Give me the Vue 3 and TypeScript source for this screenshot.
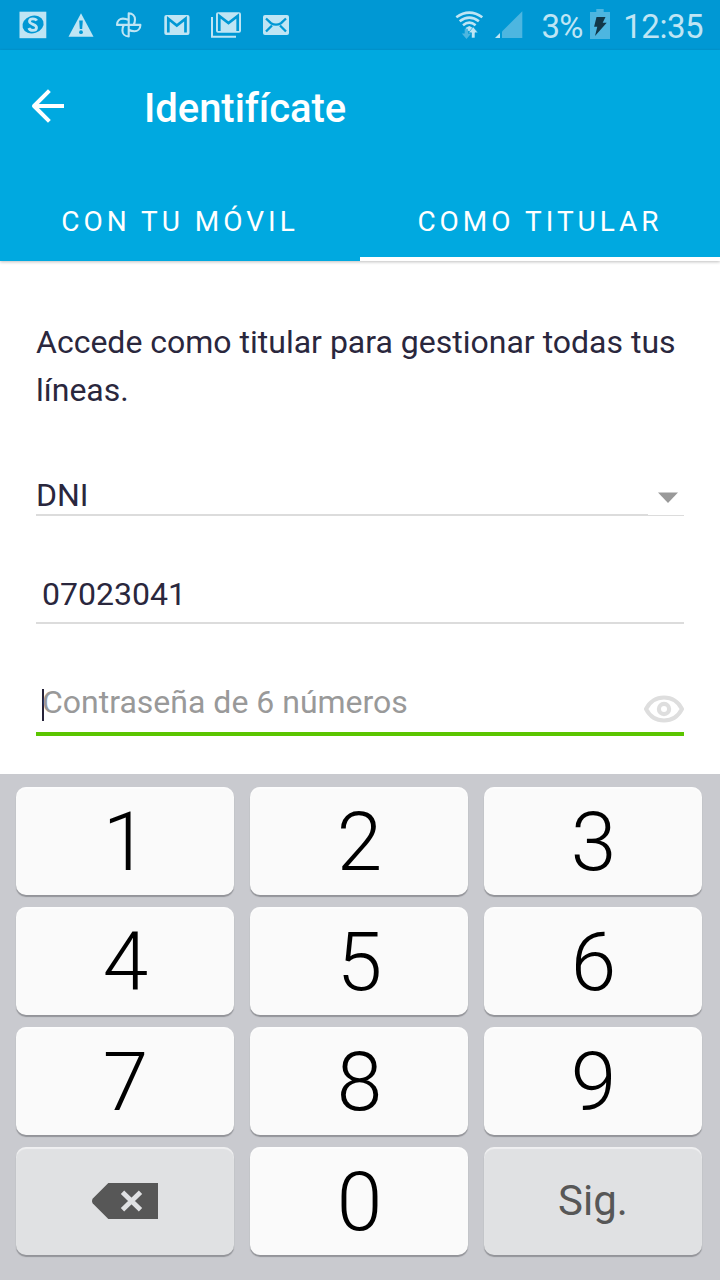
<script setup lang="ts">
import { ref } from 'vue'

interface Key {
  label: string
  kind: 'digit' | 'delete' | 'next'
}

const tabs: string[] = ['CON TU MÓVIL', 'COMO TITULAR']
const activeTab = ref<number>(1)
const documentNumber = ref<string>('07023041')

const keys: Key[] = [
  ...['1', '2', '3', '4', '5', '6', '7', '8', '9'].map((label): Key => ({ label, kind: 'digit' })),
  { label: 'Borrar', kind: 'delete' },
  { label: '0', kind: 'digit' },
  { label: 'Sig.', kind: 'next' },
]
</script>

<template>
  <div class="screen">
    <div class="status">
      <div class="notifications">
        <svg width="28" height="28" viewBox="19 11 28 28">
          <rect x="19.5" y="11.7" width="26.8" height="26.5" fill="#bfe5f4" />
          <ellipse cx="33" cy="24.5" rx="10.8" ry="8.7" transform="rotate(-18 33 24.5)" fill="#0098d4" />
          <path d="M36.7 20.7C35.6 18.4 30 17.8 29.5 21c-.5 3.8 7.7 3 7 7-.5 3.2-6.7 3.1-7.6 0" fill="none" stroke="#bfe5f4" stroke-width="2.8" />
        </svg>
        <svg width="26" height="26" viewBox="68 12 26 26">
          <path d="M81 13.2 93.5 36.7H68.5Z" fill="#bfe5f4" />
          <path d="M79.2 20.5h3.6l-.6 8.5h-2.4Z" fill="#0098d4" />
          <circle cx="81" cy="32.2" r="1.9" fill="#0098d4" />
        </svg>
        <svg width="28" height="28" viewBox="115 11 28 28" fill="none" stroke="#bfe5f4" stroke-width="2.1" stroke-linejoin="round">
          <path d="M128.700 24.900V13.400c4 0 6.300 2.900 6.300 6 0 2.200-.6 4-1.500 5.500M128.700 24.900H140.400c0 4-2.900 6.300-6 6.300-2.200 0-4-.6-5.700-1.500M128.700 24.900V36.400c-4 0-6.300-2.900-6.300-6 0-2.200.6-4 1.500-5.500M128.700 24.900H117c0-4 2.900-6.300 6-6.300 2.200 0 4 .6 5.700 1.500" />
        </svg>
        <svg width="26" height="22" viewBox="164 14 26 22">
          <rect x="164.3" y="15" width="25.2" height="20" rx="2" fill="#bfe5f4" />
          <path d="M168.3 32.5V18.7l8.5 6.8 8.7-6.8V32.5" fill="none" stroke="#0098d4" stroke-width="2.7" />
        </svg>
        <svg width="31" height="28" viewBox="210 11 31 28">
          <rect x="215" y="12.2" width="25" height="20.5" rx="2" fill="#bfe5f4" />
          <path d="M218.3 31V16l9.2 7 9.2-7v15" fill="none" stroke="#0098d4" stroke-width="2.7" />
          <path d="M211 17v19.7h24" fill="none" stroke="#bfe5f4" stroke-width="2" />
        </svg>
        <svg width="27" height="22" viewBox="260 14 27 22">
          <rect x="260" y="15" width="26" height="20" rx="2" fill="#bfe5f4" />
          <path d="M263 18.5 268 23.2Q273 26 278 23.2L283 18.5M263 31.5l6-6M283 31.5l-6-6" fill="none" stroke="#0098d4" stroke-width="2.3" />
        </svg>
      </div>
      <div class="system">
        <svg class="wifi" width="30" height="30" viewBox="454 10 30 30" fill="none" stroke="#bfe5f4">
          <path d="M456.3 17.2q13-9.3 26 0M459.7 21.3q9.6-7.5 19.2 0M463 25.2q6.3-5 12.6 0" stroke-width="2.6" />
          <path d="m465.5 28 3.8-2 3.8 2-3.8 3.7Z" fill="#bfe5f4" stroke="none" />
          <path d="M464.7 28.700h3.300v4.800h3.200l-4.700 5.600-4.700-5.600h2.900Z" fill="#4db6e0" stroke="none" />
          <path d="m473.200 26.800 4.800 6h-3v5.200h-3.500v-5.200h-3Z" fill="#bfe5f4" stroke="#0098d4" stroke-width=".6" />
        </svg>
        <svg class="signal" width="28" height="28" viewBox="495 11 28 28">
          <path d="M495 38 500 33v5Z" fill="#bfe5f4" />
          <path d="M502 38V31.5L522.3 11.3V38Z" fill="#4db6e0" />
        </svg>
        <span class="percent">3%</span>
        <svg class="battery" width="20" height="30" viewBox="590 9 20 30">
          <path d="M590 12h6.3V9h7.4v3h6.3v27h-20Z" fill="#4db6e0" />
          <path d="M596.5 17h9l-2.8 5.7h4L595 36l2.3-9.3h-3.2Z" fill="#123748" />
        </svg>
        <span class="clock">12:35</span>
      </div>
    </div>

    <header class="header">
      <div class="toolbar">
        <svg class="back" width="36" height="36" viewBox="30 88 36 36" fill="none" stroke="#fff" stroke-width="4" stroke-linejoin="round">
          <path d="M64 106H34M49.4 90.6 34 106l15.4 15.4" />
        </svg>
        <h1>Identifícate</h1>
      </div>
      <nav class="tabs">
        <button
          v-for="(tab, i) in tabs"
          :key="tab"
          class="tab"
          :class="{ active: i === activeTab }"
          @click="activeTab = i"
        >
          {{ tab }}
        </button>
      </nav>
    </header>

    <main class="form">
      <p class="intro">Accede como titular para gestionar todas tus líneas.</p>
      <div class="select">
        <span class="select-value">DNI</span>
        <span class="select-arrow">
          <svg width="20" height="12" viewBox="0 0 20 12"><path d="M0 .5h20L10 11Z" fill="#999" /></svg>
        </span>
      </div>
      <div class="field document">{{ documentNumber }}</div>
      <div class="field password">
        <span class="caret"></span>
        <span class="placeholder">Contraseña de 6 números</span>
        <svg class="eye" width="40" height="28" viewBox="0 0 40 28" fill="none" stroke="#dedede">
          <path d="M2 14C10-1.300 30-1.300 38 14 30 29.300 10 29.300 2 14Z" stroke-width="4" />
          <circle cx="20" cy="14" r="5.1" stroke-width="4.2" />
        </svg>
      </div>
    </main>

    <div class="keyboard">
      <button v-for="key in keys" :key="key.label" class="key" :class="key.kind" :aria-label="key.label">
        <svg v-if="key.kind === 'delete'" width="66" height="36" viewBox="0 0 66 36">
          <path d="M16.3 0H66v36H16.3L.8 20.4Q-.8 18 .8 15.6Z" fill="#575757" />
          <path d="m30.5 9.3 18 17.4M48.5 9.3l-18 17.4" stroke="#e0e1e3" stroke-width="4.8" />
        </svg>
        <span v-else>{{ key.label }}</span>
      </button>
    </div>
  </div>
</template>

<style>
body {
  margin: 0;
}
</style>

<style scoped>
.screen {
  display: flex;
  flex-direction: column;
  width: 720px;
  height: 1280px;
  overflow: hidden;
  background: #fff;
  color: #2a273d;
  font-family: Roboto, 'Liberation Sans', sans-serif;
}
svg {
  display: block;
  flex: none;
}
button {
  border: 0;
  padding: 0;
  font-family: inherit;
}
.status {
  display: flex;
  justify-content: space-between;
  box-sizing: border-box;
  height: 50px;
  padding: 0 17px 0 19px;
  background: #0098d4;
}
.notifications {
  display: flex;
  align-items: center;
  gap: 21px;
}
.system {
  display: flex;
  align-items: center;
  color: #bfe5f4;
  font-size: 33px;
  letter-spacing: -0.5px;
  line-height: 50px;
}
.signal {
  margin: 0 19px 0 11px;
}
.battery {
  margin: 0 13px 2px 8px;
}
.percent,
.clock {
  padding-top: 3px;
}
.percent {
  letter-spacing: -1px;
}
.header {
  height: 211px;
  background: #00a9e0;
  box-shadow: 0 1px 3px rgba(0, 0, 0, 0.25);
}
.toolbar {
  display: flex;
  align-items: center;
  height: 112px;
  padding-left: 30px;
}
h1 {
  margin: 6px 0 0 78px;
  color: #fff;
  font-size: 40px;
  font-weight: 500;
  letter-spacing: -0.05px;
  line-height: 48px;
}
.tabs {
  display: grid;
  grid-template-columns: 1fr 1fr;
  height: 99px;
}
.tab {
  box-sizing: border-box;
  padding-top: 23px;
  border-bottom: 4px solid transparent;
  background: none;
  color: #fff;
  font-size: 28px;
  letter-spacing: 4px;
}
.tab.active {
  border-bottom-color: #fff;
}
.form {
  flex: 1;
  padding: 57px 36px 0;
  font-size: 32px;
}
.intro {
  margin: 0;
  line-height: 48px;
}
.select {
  display: flex;
  height: 102px;
}
.select-value {
  box-sizing: border-box;
  flex: 1;
  padding-top: 62px;
  border-bottom: 2px solid #dcdcdc;
  line-height: 38px;
}
.select-arrow {
  box-sizing: border-box;
  width: 36px;
  padding: 78px 0 0 10px;
  border-bottom: 1px solid #dcdcdc;
}
.field {
  box-sizing: border-box;
  height: 108px;
  padding: 59px 6px 0;
  border-bottom: 2px solid #dcdcdc;
  line-height: 38px;
}
.password {
  display: flex;
  height: 112px;
  padding: 59px 0 0 6px;
  border-bottom: 4px solid #5bc500;
}
.caret {
  width: 2px;
  height: 32px;
  margin: 6px -2px 0 0;
  background: #262339;
}
.placeholder {
  flex: 1;
  color: #999;
}
.eye {
  margin-top: 12px;
}
.keyboard {
  display: grid;
  grid-template-columns: repeat(3, 218px);
  grid-auto-rows: 108px;
  gap: 12px 16px;
  box-sizing: border-box;
  height: 506px;
  padding: 13px 16px;
  background: #c9cacf;
}
.key {
  display: flex;
  align-items: center;
  justify-content: center;
  border-radius: 10px;
  background: #fafafa;
  box-shadow: 0 2px 1px #939499, inset 0 2px 1px rgba(255, 255, 255, 0.5);
  color: #000;
  font-size: 82px;
  font-weight: 300;
  line-height: 96px;
}
.key.digit {
  padding: 2px 0 0 1px;
}
.key.delete,
.key.next {
  background: #e0e1e3;
  color: #575757;
}
.key.next {
  font-size: 42px;
  font-weight: 400;
}
</style>
